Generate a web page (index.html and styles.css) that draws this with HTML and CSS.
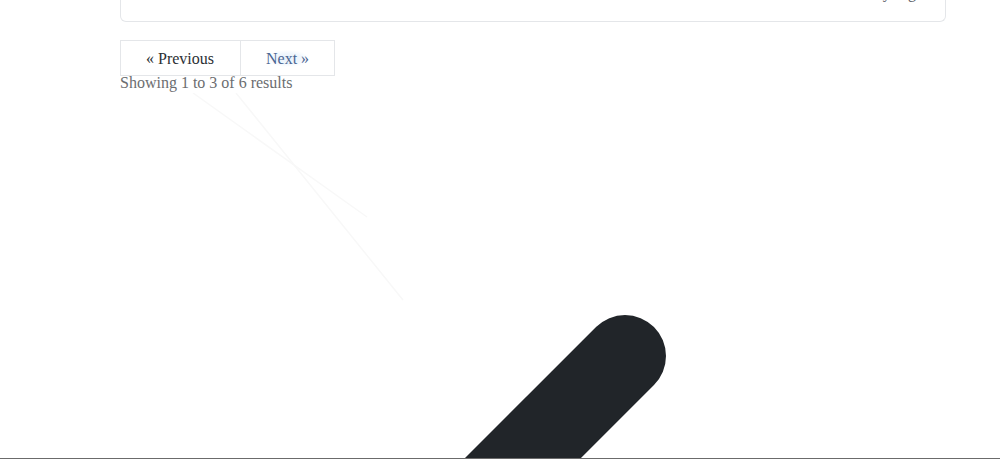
FILE: index.html
```html
<!DOCTYPE html>
<html lang="en">
<head>
<meta charset="utf-8">
<title>Posts</title>
<link rel="stylesheet" href="styles.css">
</head>
<body>
<main class="container">
  <article class="card">
    <div class="card-meta">Posted 2 days ago</div>
  </article>

  <nav class="pager" role="navigation" aria-label="Pagination Navigation">
    <div class="pager-mobile">
      <span class="page-btn page-prev">&laquo; Previous</span>
      <a class="page-btn page-next" href="#"><span class="glow">Next &raquo;</span></a>
    </div>
    <p class="pager-summary">Showing 1 to 3 of 6 results</p>
    <svg class="chev" viewBox="0 0 826 826" aria-hidden="true">
      <line x1="73" y1="0" x2="247" y2="124" class="ghost"/>
      <line x1="116" y1="0" x2="283" y2="207" class="ghost"/>
      <g transform="translate(13 17) scale(41)">
        <path fill-rule="evenodd" clip-rule="evenodd" d="M12.707 5.293a1 1 0 010 1.414L9.414 10l3.293 3.293a1 1 0 01-1.414 1.414l-4-4a1 1 0 010-1.414l4-4a1 1 0 011.414 0z"/>
      </g>
    </svg>
  </nav>
</main>
<div class="frame-edge"></div>
</body>
</html>
```

FILE: styles.css
```css
html {
  overflow: hidden;
}

body {
  margin: 0;
  background: #ffffff;
  font-family: "Liberation Serif", "Times New Roman", serif;
  font-size: 16px;
  color: #212529;
}

.container {
  width: 826px;
  padding-left: 120px;
}

.card {
  margin-top: -16px;
  border: 1px solid #e4e6e9;
  border-top: none;
  border-radius: 0 0 6px 6px;
  padding: 0 21px 19px 16px;
}

.card-meta {
  text-align: right;
  line-height: 18px;
  color: #555a60;
}

.pager {
  margin-top: 18px;
}

.pager-mobile {
  display: flex;
}

.page-btn {
  display: block;
  padding: 9px 25px 7px;
  border: 1px solid #e4e6e9;
  line-height: 18px;
  color: #2b2f33;
  text-decoration: none;
}

.page-prev {
  padding-right: 26px;
}

.page-next {
  margin-left: -1px;
  padding: 9px 25px 7px 25px;
  color: #4a6592;
}

.glow {
  background: radial-gradient(ellipse at center, #e6f0fb 0%, #f1f7fd 45%, rgba(255, 255, 255, 0) 72%);
}

.pager-summary {
  margin: 0;
  line-height: 13px;
  color: #6b6d70;
}

.chev {
  display: block;
  width: 826px;
  height: 826px;
  margin-top: 4px;
  fill: #212529;
}

.ghost {
  stroke: #f8f8f8;
  stroke-width: 1.5;
}

.frame-edge {
  position: fixed;
  left: 0;
  right: 0;
  bottom: 0;
  height: 1px;
  background: #6b6b6b;
}
```
